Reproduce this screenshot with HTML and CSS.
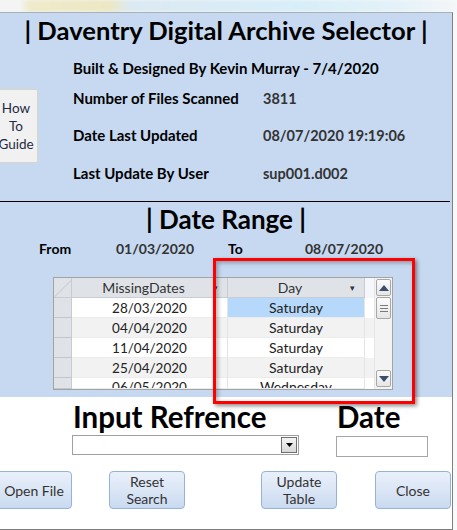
FILE: index.html
```html
<!DOCTYPE html>
<html>
<head>
<meta charset="utf-8">
<link rel="stylesheet" href="styles.css">
</head>
<body>
<div class="topstrip"></div>
<div class="form">
  <div class="header">
    <h1 class="title">| Daventry Digital Archive Selector |</h1>
    <div class="info">
      <div class="howto">How<br>To<br>Guide</div>
      <div class="details">
        <div class="row r1"><span class="lbl">Built &amp; Designed By Kevin Murray - 7/4/2020</span></div>
        <div class="row r2"><span class="lbl">Number of Files Scanned</span><span class="val">3811</span></div>
        <div class="row r3"><span class="lbl">Date Last Updated</span><span class="val">08/07/2020 19:19:06</span></div>
        <div class="row r4"><span class="lbl">Last Update By User</span><span class="val">sup001.d002</span></div>
      </div>
    </div>
    <div class="sep"></div>
    <h2 class="subtitle">| Date Range |</h2>
    <div class="range">
      <span class="lbl">From</span><span class="val">01/03/2020</span><span class="lbl">To</span><span class="val">08/07/2020</span>
    </div>
    <div class="table">
      <div class="grid">
        <div class="tr head">
          <div class="sel corner"></div>
          <div class="cell c1"><span class="ht">MissingDates</span><span class="arr">&#9662;</span></div>
          <div class="cell c2"><span class="ht">Day</span><span class="arr">&#9662;</span></div>
          <div class="fill"></div>
        </div>
        <div class="tr"><div class="sel"></div><div class="cell c1">28/03/2020</div><div class="cell c2 active">Saturday</div><div class="fill"></div></div>
        <div class="tr alt"><div class="sel"></div><div class="cell c1">04/04/2020</div><div class="cell c2">Saturday</div><div class="fill"></div></div>
        <div class="tr"><div class="sel"></div><div class="cell c1">11/04/2020</div><div class="cell c2">Saturday</div><div class="fill"></div></div>
        <div class="tr alt"><div class="sel"></div><div class="cell c1">25/04/2020</div><div class="cell c2">Saturday</div><div class="fill"></div></div>
        <div class="tr last"><div class="sel"></div><div class="cell c1">06/05/2020</div><div class="cell c2">Wednesday</div><div class="fill"></div></div>
      </div>
      <div class="scroll">
        <div class="sbtn up"><svg width="10" height="6" viewBox="0 0 10 6"><path d="M0 6 L5 0 L10 6 Z" fill="#3d4d6e"/></svg></div>
        <div class="thumb"><svg width="8" height="7" viewBox="0 0 8 7"><path d="M0 .5H8M0 3.5H8M0 6.5H8" stroke="#7a7a7a" stroke-width="1"/></svg></div>
        <div class="track"></div>
        <div class="sbtn down"><svg width="10" height="6" viewBox="0 0 10 6"><path d="M0 0 L5 6 L10 0 Z" fill="#3d4d6e"/></svg></div>
      </div>
    </div>
  </div>
  <div class="body">
    <div class="inputs">
      <div class="big">Input Refrence</div>
      <div class="big">Date</div>
      <div class="combo"><span class="dd"><svg width="7" height="4" viewBox="0 0 7 4"><path d="M0 0H7L3.5 4Z" fill="#000"/></svg></span></div>
      <div class="textbox"></div>
    </div>
    <div class="buttons">
      <div class="btn b1">Open File</div>
      <div class="btn b2">Reset<br>Search</div>
      <div class="btn b3">Update<br>Table</div>
      <div class="btn b4">Close</div>
    </div>
  </div>
  <div class="highlight"></div>
</div>
</body>
</html>
```
FILE: styles.css
```css
html, body {
  margin: 0;
  padding: 0;
}
body {
  width: 457px;
  height: 530px;
  overflow: hidden;
  background: linear-gradient(90deg, #f4f4f4 0%, #f8f9fa 100%);
  font-family: Lato, "Open Sans", sans-serif;
  color: #000;
}
.topstrip {
  height: 12px;
  background:
    linear-gradient(90deg, transparent 0px, transparent 20px, #eeeacb 30px, #ece8c4 110px, #dbe9f2 130px, #d7eef8 300px, #e4f2f8 400px, #f4f6f8 457px);
  filter: blur(1.5px);
}
.form {
  width: 452px;
  height: 516px;
  border-top: 1px solid #a8b0b8;
  border-right: 1px solid #7f7f7f;
  border-bottom: 1px solid #7f7f7f;
  background: #fff;
  position: relative;
  overflow: hidden;
}
.header {
  height: 384px;
  background: #c6d9f1;
  overflow: hidden;
}
.title {
  margin: 0;
  padding-top: 2px;
  font-size: 25.6px;
  line-height: 30px;
  font-weight: 700;
  text-align: center;
  white-space: nowrap;
}
.info {
  display: flex;
  align-items: flex-start;
}
.howto {
  margin-left: -6px;
  margin-top: 44px;
  width: 42px;
  height: 72px;
  background: #f1f1f1;
  border: 1px solid #d9d6c8;
  border-radius: 2px;
  font-size: 13.5px;
  line-height: 18px;
  color: #1f2a44;
  text-align: center;
  display: flex;
  align-items: center;
  justify-content: center;
}
.details {
  margin-left: 35px;
  margin-top: 13px;
}
.row {
  display: flex;
  font-size: 15px;
  line-height: 20px;
  font-weight: 700;
}
.r1 { height: 30px; }
.r2 { height: 37px; }
.r3 { height: 38px; }
.r4 { height: 20px; }
.row .lbl { width: 190px; white-space: nowrap; }
.row .val { color: #333; position: relative; top: 1px; font-size: 14.5px; }
.sep {
  margin-top: 18px;
  height: 1px;
  background: #000;
  margin-right: 2px;
}
.subtitle {
  margin: 4px 0 0;
  font-size: 26px;
  line-height: 26px;
  font-weight: 700;
  text-align: center;
}
.range {
  margin-top: 8px;
  padding-left: 39px;
  display: grid;
  grid-template-columns: 77px 112px 77px auto;
  font-size: 14px;
  line-height: 18px;
  font-weight: 700;
}
.range .val { color: #333; }
.table {
  margin-top: 19px;
  margin-left: 53px;
  width: 338px;
  height: 111px;
  border: 1px solid #a3a3a3;
  display: flex;
  background: #fff;
}
.grid {
  width: 320px;
  height: 111px;
  overflow: hidden;
}
.tr {
  display: flex;
  height: 20px;
  background: #fff;
  font-size: 14px;
  line-height: 20px;
  color: #222;
}
.tr.last { height: 11px; overflow: hidden; line-height: 18px; }
.tr.alt { background: #f2f2f2; }
.tr .c1 { font-size: 13.5px; }
.sel {
  width: 18px;
  background: #dfe3e8;
  border-right: 1px solid #c8ccd2;
  border-bottom: 1px solid #c3c7cd;
  box-sizing: border-box;
}
.cell {
  box-sizing: border-box;
  text-align: center;
  border-right: 1px solid #e4e4e4;
  border-bottom: 1px solid #ececec;
  overflow: hidden;
}
.c1 { width: 156px; }
.c2 { width: 137px; }
.fill { width: 9px; }
.cell.active { background: #b6d8fa; }
.head { background: #dfe3e8; color: #333; }
.head .cell {
  display: flex;
  border-right: 1px solid #c9cdd3;
  border-bottom: 1px solid #c9cdd3;
}
.head .c1 { font-size: 14px; }
.head .ht { flex: 1; text-align: center; padding-left: 2px; }
.head .arr { width: 14px; font-size: 9px; color: #333; text-align: left; }
.head .fill { background: #f5f7fa; }
.corner {
  background: linear-gradient(135deg, #dfe3e8 50%, #c9cdd3 50%, #dfe3e8 60%);
  border-bottom: 1px solid #c9cdd3;
}
.scroll {
  width: 18px;
  background: #f3f3f3;
  border-left: 1px solid #e6e6e6;
  display: flex;
  flex-direction: column;
  align-items: center;
  padding-top: 1px;
  box-sizing: border-box;
}
.sbtn, .thumb {
  width: 15px;
  box-sizing: border-box;
  border: 1px solid #a7a7a7;
  border-radius: 2px;
  background: linear-gradient(180deg, #fbfbfb, #e6e6e6);
  display: flex;
  align-items: center;
  justify-content: center;
}
.sbtn { height: 17px; }
.thumb { height: 22px; margin-top: 1px; }
.track { flex: 1; }
.down { margin-bottom: 2px; }
.highlight {
  position: absolute;
  left: 213px;
  top: 245px;
  width: 196px;
  height: 140px;
  border: 3px solid #ff0000;
  box-shadow: 2px 2px 4px rgba(0,0,0,0.45), inset 2px 2px 4px rgba(0,0,0,0.3);
}
.body {
  padding-top: 4px;
}
.inputs {
  display: grid;
  grid-template-columns: 264px 92px;
  padding-left: 72px;
  row-gap: 2px;
}
.big {
  font-size: 29.5px;
  line-height: 32px;
  font-weight: 700;
  padding-left: 1px;
  white-space: nowrap;
}
.combo {
  width: 227px;
  height: 20px;
  box-sizing: border-box;
  border: 1px solid #a0a0a0;
  background: #fff;
  display: flex;
  justify-content: flex-end;
  align-items: center;
  padding-right: 1px;
}
.dd {
  width: 16px;
  height: 16px;
  box-sizing: border-box;
  border: 1px solid #707070;
  background: linear-gradient(180deg, #f4f4f4, #d8d8d8);
  display: flex;
  align-items: center;
  justify-content: center;
}
.textbox {
  width: 92px;
  height: 21px;
  box-sizing: border-box;
  border: 1px solid #a6a6a6;
  background: #fff;
  margin-top: 1px;
}
.buttons {
  margin-top: 14px;
  display: flex;
  margin-left: -4px;
}
.btn {
  width: 76px;
  height: 38px;
  box-sizing: border-box;
  border: 1px solid #95b3d7;
  border-radius: 4px;
  background: linear-gradient(180deg, #e9f0fa 0%, #dbe6f5 50%, #c9daf0 100%);
  color: #333;
  font-size: 14px;
  line-height: 17px;
  text-align: center;
  display: flex;
  align-items: center;
  justify-content: center;
}
.b2 { margin-left: 37px; }
.b3 { margin-left: 76px; }
.b4 { margin-left: 38px; }
```
